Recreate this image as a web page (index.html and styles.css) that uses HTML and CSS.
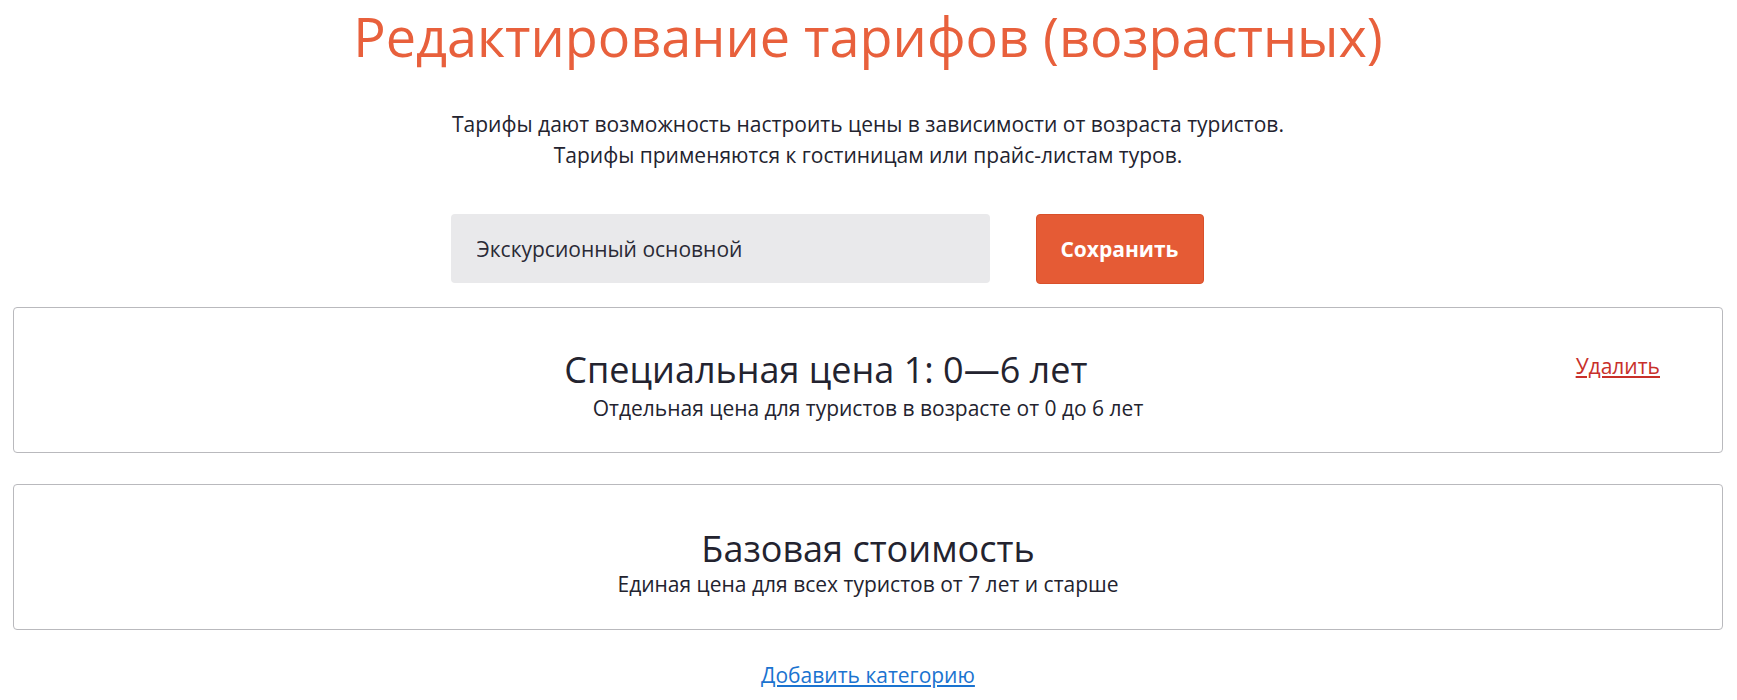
FILE: index.html
```html
<!DOCTYPE html>
<html lang="ru">
<head>
  <meta charset="UTF-8" />
  <title>Редактирование тарифов</title>
  <link rel="stylesheet" href="styles.css">
</head>
<body>

  <h1 class="page-title">Редактирование тарифов (возрастных)</h1>

  <p class="page-lead">
    Тарифы дают возможность настроить цены в зависимости от возраста туристов.<br>
    Тарифы применяются к гостиницам или прайс-листам туров.
  </p>

  <form class="tariff-form">
    <input type="text" class="tariff-name" value="Экскурсионный основной" />
    <button type="button" class="btn-save">Сохранить</button>
  </form>

  <div class="age-card">
    <div class="age-card-head">
      <h2 class="age-card-title">Специальная цена 1: 0—6 лет</h2>
      <a href="#" class="link-delete">Удалить</a>
    </div>
    <p class="age-card-desc">Отдельная цена для туристов в возрасте от 0 до 6 лет</p>
  </div>

  <div class="age-card">
    <h2 class="age-card-title">Базовая стоимость</h2>
    <p class="age-card-desc">Единая цена для всех туристов от 7 лет и старше</p>
  </div>

  <div class="add-row">
    <a href="#" class="link-add">Добавить категорию</a>
  </div>

</body>
</html>
```

FILE: styles.css
```css
body {
  font-family: 'Open Sans', 'Noto Sans', sans-serif;
  color: #23232f;
  background: #fff;
  margin: 0;
  padding: 0 14px 0 13px;
}

.page-title {
  font-size: 54px;
  font-weight: 400;
  color: #e8603c;
  text-align: center;
  margin: 0;
  line-height: 72px;
}

.page-lead {
  font-size: 21px;
  line-height: 31px;
  text-align: center;
  margin: 37px 0 0;
}

/* строка с названием тарифа */
.tariff-form {
  display: flex;
  justify-content: center;
  gap: 46px;
  padding-right: 82px;
  margin: 43px 0 0;
}

.tariff-name {
  width: 539px;
  height: 69px;
  box-sizing: border-box;
  padding: 0 26px;
  border: none;
  border-radius: 4px;
  background: #e9e9eb;
  font-family: inherit;
  font-size: 21px;
  color: #2a2a36;
}

.btn-save {
  width: 168px;
  height: 70px;
  border: 1px solid #d9502a;
  border-radius: 4px;
  background: #e55b35;
  color: #fff;
  font-family: inherit;
  font-size: 21px;
  font-weight: 700;
  cursor: pointer;
}

.age-card {
  border: 1px solid #b9b9bd;
  border-radius: 4px;
  height: 146px;
  box-sizing: border-box;
  padding: 38px 62px 0;
  text-align: center;
  margin-top: 23px;
}

.age-card + .age-card {
  margin-top: 31px;
  padding-top: 40px;
}

.age-card-head {
  display: flex;
  align-items: flex-start;
}

.age-card-head .age-card-title {
  flex: 1;
}

.age-card-title {
  font-size: 36px;
  font-weight: 400;
  line-height: 48px;
  margin: 0;
}

.age-card-desc {
  font-size: 21px;
  line-height: 28px;
  margin: -3px 0 0;
}

.age-card-head + .age-card-desc {
  margin-top: 0;
}

.link-delete {
  color: #c8302a;
  font-size: 21px;
  line-height: 28px;
  margin-top: 6px;
}

.add-row {
  text-align: center;
  margin-top: 31px;
}

.link-add {
  color: #1a73d0;
  font-size: 21px;
}
```
